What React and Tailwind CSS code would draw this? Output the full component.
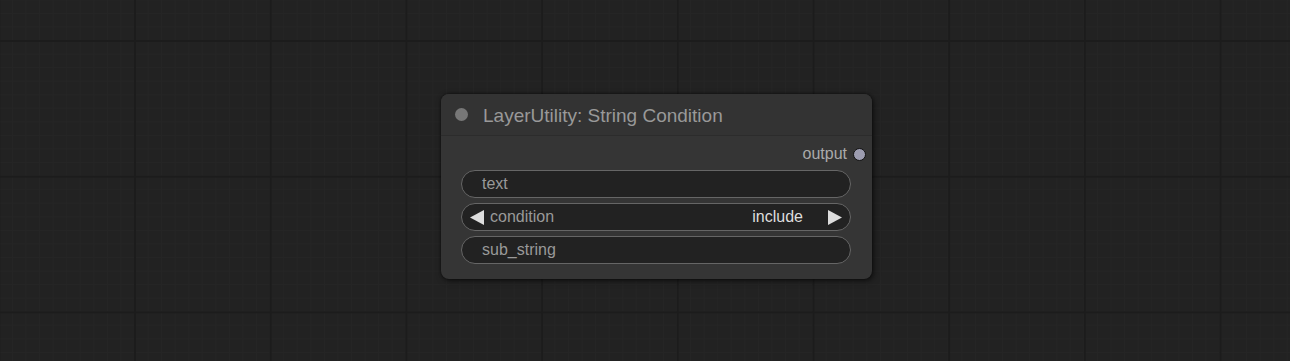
import React from "react";

const widgets = [
  { name: "text" },
  { name: "condition", value: "include", combo: true },
  { name: "sub_string" },
];

const Widget = ({ name, value, combo }) => (
  <div className="flex h-[28px] items-center rounded-full border border-[#666] bg-[#222] text-[16px] leading-none">
    {combo ? (
      <>
        <span className="ml-[8px] mr-[6px]">
          <svg width="14" height="15" viewBox="0 0 14 15">
            <path d="M14 0 L0 7.5 L14 15 Z" fill="#ddd" />
          </svg>
        </span>
        <span className="text-[#999]">{name}</span>
        <span className="ml-auto mr-[25px] text-[#ddd]">{value}</span>
        <span className="mr-[8px]">
          <svg width="14" height="15" viewBox="0 0 14 15">
            <path d="M0 0 L14 7.5 L0 15 Z" fill="#ddd" />
          </svg>
        </span>
      </>
    ) : (
      <span className="ml-[20px] text-[#999]">{name}</span>
    )}
  </div>
);

export default function App() {
  return (
    <div className="h-[361px] w-full overflow-hidden bg-[#222] bg-[linear-gradient(to_right,#1c1c1c_1.5px,transparent_1.5px),linear-gradient(to_bottom,#1c1c1c_1.5px,transparent_1.5px),linear-gradient(to_right,#252525_1px,transparent_1px),linear-gradient(to_bottom,#252525_1px,transparent_1px)] bg-[size:135.7px_135.7px,135.7px_135.7px,13.57px_13.57px,13.57px_13.57px] bg-[position:134px_40px,134px_40px,134px_40px,134px_40px] pt-[94px] pl-[441px] font-['Liberation_Sans',Arial,sans-serif]">
      <div className="w-[431px] overflow-hidden rounded-[8px] bg-[#353535] shadow-[0_0_3px_rgba(0,0,0,0.6),2px_2px_6px_rgba(0,0,0,0.5)]">
        <div className="flex h-[42px] items-center border-b border-[#2c2c2c] bg-[#333]">
          <span className="ml-[14px] h-[13px] w-[13px] rounded-full bg-[#777]" />
          <span className="ml-[15px] pt-[1px] text-[19px] leading-none text-[#999]">
            LayerUtility: String Condition
          </span>
        </div>
        <div className="px-[20px] pb-[15px] pt-[8px]">
          <div className="mr-[-14px] flex h-[20px] items-center justify-end text-[16px] leading-none text-[#aaa]">
            <span>output</span>
            <span className="ml-[6px] h-[13px] w-[13px] rounded-full border-[1.5px] border-[#111] bg-[#9c9cb0]" />
          </div>
          <div className="mt-[6px] mr-[1px] flex flex-col gap-[5px]">
            {widgets.map((w) => (
              <Widget key={w.name} {...w} />
            ))}
          </div>
        </div>
      </div>
    </div>
  );
}
